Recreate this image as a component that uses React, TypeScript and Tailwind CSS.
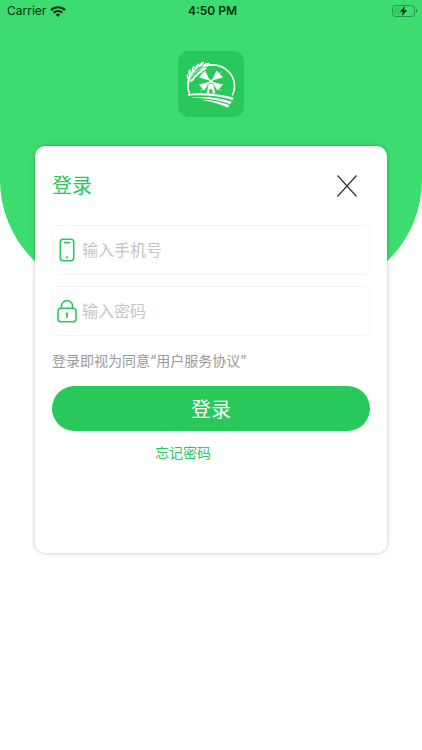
import { useState } from "react";

function StatusBar() {
  return (
    <div className="grid h-[22px] grid-cols-3 items-center pl-[7px] pr-1 text-[12px] text-[#0b2b14]">
      <div className="flex items-center gap-1">
        <span>Carrier</span>
        <svg className="h-[11px] w-[16px]" viewBox="0 0 16 11" fill="none" stroke="currentColor">
          <path d="M1 4.1a10 10 0 0 1 14 0" strokeWidth="2.2" />
          <path d="M3.6 6.8a6.3 6.3 0 0 1 8.8 0" strokeWidth="2" />
          <path d="M8 11 5.7 8.6a3.3 3.3 0 0 1 4.6 0z" fill="currentColor" stroke="none" />
        </svg>
      </div>
      <span className="text-center font-semibold">4:50 PM</span>
      <svg className="h-3 w-[26px] justify-self-end" viewBox="0 0 26 12">
        <rect x="0.5" y="0.5" width="22" height="11" rx="3" fill="none" stroke="#25964a" />
        <path d="M2 3.5Q2 2 3.5 2H10L7 7h2.5L8.5 10h-5Q2 10 2 8.5z" fill="#34c765" />
        <path d="M24 4q1.5 .5 1.5 2T24 8z" fill="#25964a" />
        <path d="M12.8 1 8 6.8h3L9.8 11 15 5.2h-3z" fill="#04140a" />
      </svg>
    </div>
  );
}

function Logo() {
  return (
    <div className="h-[66px] w-[66px] rounded-[10px] bg-[#28c85a]">
      <svg className="h-full w-full" viewBox="0 0 66 66" fill="#fff">
        {/* arch */}
        <path
          d="M11.5 42.5C8 35 10 24.500 17 19M29 14.500C43 11.500 56.500 21 56.500 35c0 4-.8 7-2.200 9.500"
          fill="none"
          stroke="#fff"
          strokeWidth="1.6"
        />
        {/* wheat */}
        <path d="M10 37C10 27 17 18 30 15" fill="none" stroke="#fff" strokeWidth="0.8" />
        <path d="M32 12q-5-1-8 3.500 5 1 8-3.500z" />
        <path d="M26 10.500q-5 1-5.500 6 5-1.500 5.500-6z" />
        <path d="M21 12q-4.500 2-3.800 7 4.500-2.500 3.800-7z" />
        <path d="M16 14.500q-3.500 3-2 7.500 3.500-3.500 2-7.500z" />
        <path d="M11.500 18q-2.500 4 .3 7.500 2.200-4-.3-7.500z" />
        <path d="M9 23q-1.300 4 2 7 1-4.500-2-7z" />
        <path d="M29 17q-4.500-1-7 3 4.500 .8 7-3z" />
        <path d="M24.500 20q-4.500-.5-6.500 3.500 4.500 .3 6.500-3.500z" />
        <path d="M20.500 23q-4.300 0-5.800 4 4.500-.3 5.800-4z" />
        <path d="M17 26.500q-4 .5-5.200 4.500 4.200-.8 5.200-4.500z" />
        {/* sails */}
        <path d="M32 29.800 21 26.300 27 19.500z" />
        <path d="M33.600 29.800 38.500 19.500l6.500 6.800z" />
        <path d="M32 30.800 21 33.500l5 6z" />
        <path d="M33.600 30.800 45 33.500l-5.500 6z" />
        <path d="m22.500 20.500 20.600 19.400M43.500 20.500 22.500 40" fill="none" stroke="#fff" strokeWidth="0.7" />
        {/* mill */}
        <circle cx="32.800" cy="30.300" r="1.800" />
        <path
          d="M30.500 32.500h4.800l2.200 10h-3.200V39q-1.400-1.500-2.800 0v3.500h-3.200z"
          stroke="#28c85a"
          strokeWidth="0.5"
        />
        {/* fields */}
        <path d="M10 43C25 41 42 43 55.500 46.500l-.8 2.500C40 44.500 24 43.800 10 44.700z" />
        <path d="M12 46.500c15-1.500 30 0 41.500 4.300l-1.200 2.400C40 48.300 25 47 12 46.500z" />
        <path d="M20 48.500c12 .3 23 2 31.500 6l-2.200 2.300C41 52 31 50 20 48.500z" />
      </svg>
    </div>
  );
}

function PhoneIcon() {
  return (
    <svg className="h-6 w-5" viewBox="0 0 20 24" fill="none" stroke="#2cc85c" strokeWidth="1.6">
      <rect x="3.3" y="1.3" width="13.4" height="21.4" rx="2.8" />
      <path d="M7.5 4.6h5" strokeLinecap="round" />
      <circle cx="10" cy="19.3" r="1.1" fill="#2cc85c" stroke="none" />
    </svg>
  );
}

function LockIcon() {
  return (
    <svg className="h-6 w-5" viewBox="0 0 20 24" fill="none" stroke="#2cc85c" strokeWidth="1.6">
      <rect x="1" y="9.3" width="18" height="13.4" rx="2.8" />
      <path d="M4.4 9.3V7.2a5.6 5.6 0 0 1 11.2 0v2.100" />
      <path d="M10 15v4" />
      <circle cx="10" cy="14.8" r="1.4" fill="#2cc85c" stroke="none" />
    </svg>
  );
}

export default function App() {
  const [phone, setPhone] = useState("");
  const [password, setPassword] = useState("");

  return (
    <div className="relative min-h-screen bg-white font-['Inter','Noto_Sans_CJK_SC',sans-serif]">
      <div className="absolute inset-x-0 top-0 h-[292px] rounded-b-[112px] bg-[#3cdd6e]" />
      <div className="relative">
        <StatusBar />
        <div className="mt-[29px] flex justify-center">
          <Logo />
        </div>
        <form
          onSubmit={(e) => e.preventDefault()}
          className="mx-[35px] mt-[29px] rounded-[10px] bg-white px-[17px] pt-6 pb-[90px] shadow-[0_0_4px_rgba(0,0,0,0.25)]"
        >
          <div className="flex h-8 items-center justify-between pr-3">
            <h1 className="text-[20px] text-[#2cc85c]">登录</h1>
            <button type="button" aria-label="关闭">
              <svg className="h-6 w-[22px]" viewBox="0 0 22 24" stroke="#333" strokeWidth="1.2">
                <path d="M1.5 1.5l19 21M20.5 1.5l-19 21" />
              </svg>
            </button>
          </div>

          <label className="mt-[23px] flex h-[50px] items-center gap-[5px] rounded-[5px] border border-[#f6f6f6] px-1">
            <PhoneIcon />
            <input
              type="tel"
              aria-label="手机号"
              placeholder="输入手机号"
              value={phone}
              onChange={(e) => setPhone(e.target.value)}
              className="min-w-0 flex-1 text-[16px] outline-none placeholder:text-[#c4c4c6]"
            />
          </label>
          <label className="mt-[11px] flex h-[50px] items-center gap-[5px] rounded-[5px] border border-[#f6f6f6] px-1">
            <LockIcon />
            <input
              type="password"
              aria-label="密码"
              placeholder="输入密码"
              value={password}
              onChange={(e) => setPassword(e.target.value)}
              className="min-w-0 flex-1 text-[16px] outline-none placeholder:text-[#c4c4c6]"
            />
          </label>

          <p className="mt-[15px] text-[14px] leading-5 text-[#999]">登录即视为同意“用户服务协议”</p>
          <button
            type="submit"
            className="mt-[15px] h-[45px] w-full rounded-full bg-[#28c85a] pt-0.5 text-[20px] text-white"
          >
            登录
          </button>
          <div className="mt-3 grid grid-cols-2">
            <a href="#" className="justify-self-end text-[14px] leading-5 text-[#2cc85c]">
              忘记密码
            </a>
          </div>
        </form>
      </div>
    </div>
  );
}
